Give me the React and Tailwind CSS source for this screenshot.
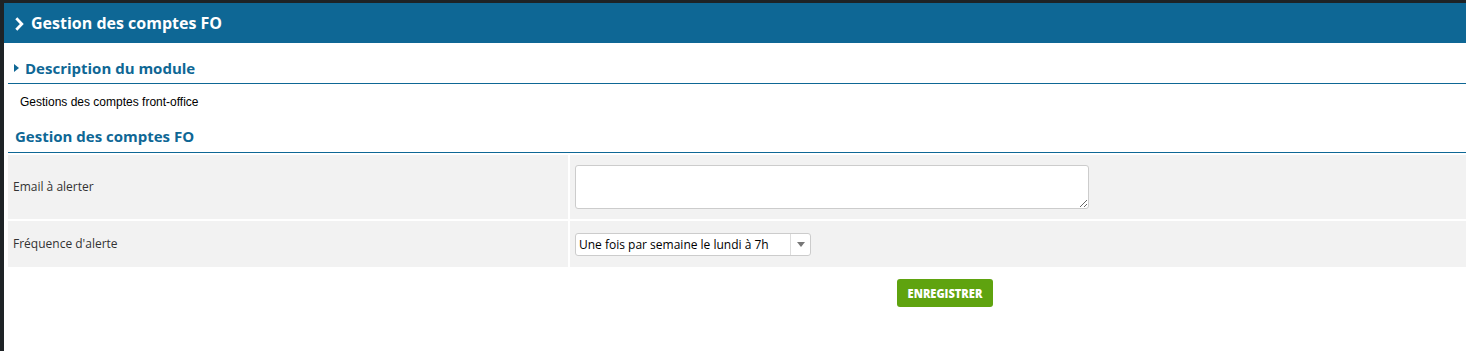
import React from "react";

const blue = "text-[#0e6795]";

const Field = ({ label, children, tall }) => (
  <>
    <div
      className={`bg-[#f2f2f2] flex items-center pl-[5px] text-[12px] text-[#333] ${
        tall ? "h-[64px]" : "h-[46px]"
      }`}
    >
      {label}
    </div>
    <div
      className={`bg-[#f2f2f2] pl-[5px] ${tall ? "h-[64px] pt-[10px]" : "h-[46px] pt-[12px]"}`}
    >
      {children}
    </div>
  </>
);

const App = () => {
  return (
    <div
      className="bg-[#1e2326] pt-[3px] pl-[4px] h-[351px] overflow-hidden"
      style={{ fontFamily: "'Open Sans', 'Liberation Sans', sans-serif" }}
    >
      <div className="bg-white h-[348px]">
        {/* Page header */}
        <div className="h-[40px] bg-[#0e6795] flex items-center pl-[11px] gap-[7px] text-white">
          <svg width="9" height="14" viewBox="0 0 9 14" className="mt-[1px]">
            <path d="M1.3 1.3 L6.8 7 L1.3 12.7" fill="none" stroke="white" strokeWidth="2.8" />
          </svg>
          <h1 className="text-[16px] font-bold leading-[20px]">Gestion des comptes FO</h1>
        </div>

        <div className="ml-[4px]">
          {/* Description */}
          <div className="h-[41px] border-b border-[#0e6795] pt-[15px] pl-[6px] flex items-start gap-[6px]">
            <svg width="5" height="8" viewBox="0 0 5 8" className="mt-[6px]">
              <path d="M0 0 L5 4 L0 8 Z" fill="#0e6795" />
            </svg>
            <h2 className={`text-[15px] font-bold leading-[20px] ${blue}`}>Description du module</h2>
          </div>
          <p
            className="pt-[10px] pl-[12px] text-[12px] leading-[16px] text-black"
            style={{ fontFamily: "'Liberation Sans', Arial, sans-serif" }}
          >
            Gestions des comptes front-office
          </p>

          {/* Settings */}
          <div className="pt-[16px] pb-[6px] pl-[7px] border-b border-[#0e6795]">
            <h2 className={`text-[15px] font-bold leading-[20px] ${blue}`}>Gestion des comptes FO</h2>
          </div>

          <div className="mt-[2px] grid grid-cols-[560px_1fr] gap-[2px]">
            <Field label="Email à alerter" tall>
              <textarea className="block w-[514px] h-[44px] bg-white border border-[#ccc] rounded-[3px] resize-y" />
            </Field>
            <Field label="Fréquence d'alerte">
              <div className="w-[236px] h-[23px] bg-white border border-[#ccc] rounded-[3px] flex items-center text-[12px] text-black">
                <span className="flex-1 pl-[3px] leading-[16px]">Une fois par semaine le lundi à 7h</span>
                <span className="w-[20px] h-full border-l border-[#ddd] flex items-center justify-center">
                  <svg width="8" height="5" viewBox="0 0 8 5">
                    <path d="M0 0 L8 0 L4 5 Z" fill="#777" />
                  </svg>
                </span>
              </div>
            </Field>
          </div>

          <div className="pt-[12px] pl-[889px]">
            <button className="w-[96px] h-[28px] bg-[#5fa30f] rounded-[3px] text-white flex items-center justify-center">
              <span className="inline-block text-[13px] font-extrabold leading-[16px] scale-x-[0.85]">
                ENREGISTRER
              </span>
            </button>
          </div>
        </div>
      </div>
    </div>
  );
};

export default App;
